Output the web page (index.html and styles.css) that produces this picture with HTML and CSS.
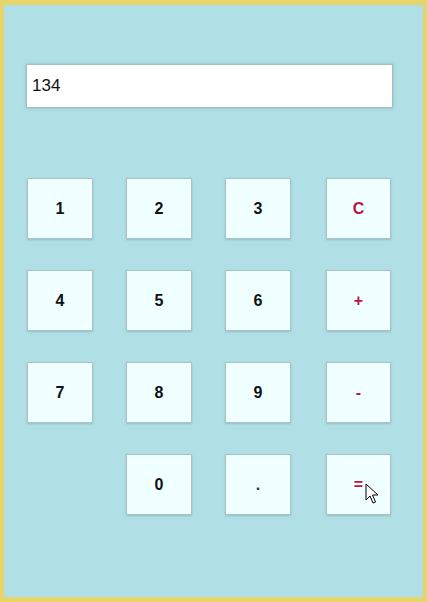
FILE: index.html
```html
<!DOCTYPE html>
<html lang="en">
<head>
    <meta charset="UTF-8">
    <meta name="viewport" content="width=device-width, initial-scale=1.0">
    <title>Calculator</title>
    <link rel="stylesheet" href="styles.css">
</head>
<body>
    <div class="calculator">
        <!-- Display -->
        <input class="display" id="display" type="text" value="134" readonly>

        <!-- Keypad -->
        <div class="keys">
            <button class="key">1</button>
            <button class="key">2</button>
            <button class="key">3</button>
            <button class="key op">C</button>

            <button class="key">4</button>
            <button class="key">5</button>
            <button class="key">6</button>
            <button class="key op">+</button>

            <button class="key">7</button>
            <button class="key">8</button>
            <button class="key">9</button>
            <button class="key op">-</button>

            <span class="blank"></span>
            <button class="key">0</button>
            <button class="key dot">.</button>
            <button class="key op equals">=
                <svg class="cursor" width="14" height="22" viewBox="0 0 14 22">
                    <path d="M1 1 L1 17 L5 13 L8 20 L10.5 19 L7.5 12 L13 12 Z" fill="#fff" stroke="#000" stroke-width="1" stroke-linejoin="round"/>
                </svg>
            </button>
        </div>
    </div>
</body>
</html>
```

FILE: styles.css
```css
/* Page frame */
body {
    margin: 0;
    font-family: "Liberation Sans", Arial, sans-serif;
}

.calculator {
    box-sizing: border-box;
    height: 602px;
    padding: 59px 30px 0 22px;
    background-color: #b0e0e6;
    border: 4px solid #e8d46c;
    border-top-width: 5px;
    border-bottom-width: 5px;
}

/* Display field */
.display {
    display: block;
    box-sizing: border-box;
    width: 367px;
    height: 44px;
    padding: 0 5px;
    font-family: "Liberation Sans", Arial, sans-serif;
    font-size: 17px;
    color: #111;
    background-color: #fff;
    border: 1px solid #a4bec2;
    box-shadow: 0 0 3px rgba(90, 130, 135, 0.4);
    outline: none;
}

/* Keypad grid */
.keys {
    display: grid;
    grid-template-columns: 66px 66px 66px 66px;
    grid-auto-rows: 61px;
    column-gap: 33px;
    row-gap: 31px;
    margin-top: 70px;
    margin-left: 1px;
}

.key {
    position: relative;
    font-family: "Liberation Sans", Arial, sans-serif;
    font-size: 16px;
    font-weight: bold;
    color: #111;
    background-color: #f0ffff;
    border: 1px solid #a9c2c6;
    box-shadow: 0 1px 2px rgba(90, 130, 135, 0.35);
    cursor: pointer;
}

.key.op {
    color: #c0143c;
}

.key.op:nth-child(4n) {
    margin-left: 2px;
    margin-right: -1px;
}

.key.dot {
    color: #333;
}

.cursor {
    position: absolute;
    left: 38px;
    top: 28px;
}
```
